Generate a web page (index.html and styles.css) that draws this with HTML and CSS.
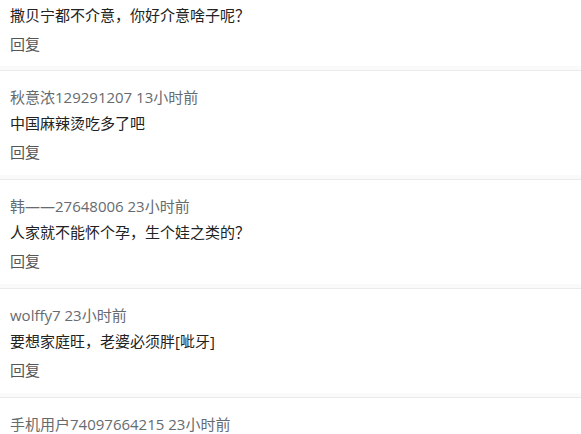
FILE: index.html
```html
<!DOCTYPE html>
<html lang="zh-CN">

<head>
    <meta charset="UTF-8">
    <meta name="viewport" content="width=device-width, initial-scale=1.0">
    <title>评论</title>

    <link rel="stylesheet" href="styles.css">
</head>

<body>
    <div class="list">
        <div class="item first">
            <div class="text">撒贝宁都不介意，你好介意啥子呢？</div>
            <div class="reply">回复</div>
        </div>
        <div class="sep"></div>

        <div class="item">
            <div class="meta">秋意浓129291207 13小时前</div>
            <div class="text">中国麻辣烫吃多了吧</div>
            <div class="reply">回复</div>
        </div>
        <div class="sep"></div>

        <div class="item">
            <div class="meta">韩——27648006 23小时前</div>
            <div class="text">人家就不能怀个孕，生个娃之类的？</div>
            <div class="reply">回复</div>
        </div>
        <div class="sep"></div>

        <div class="item">
            <div class="meta">wolffy7 23小时前</div>
            <div class="text">要想家庭旺，老婆必须胖[呲牙]</div>
            <div class="reply">回复</div>
        </div>
        <div class="sep"></div>

        <div class="item">
            <div class="meta">手机用户74097664215 23小时前</div>
        </div>
    </div>
</body>

</html>
```

FILE: styles.css
```css
* {
    box-sizing: border-box;
    padding: 0;
    margin: 0;
}

body {
    background-color: #fff;
    font-family: "Open Sans", "Noto Sans CJK SC", sans-serif;
    font-size: 15px;
    overflow: hidden;
}

.list {
    display: flex;
    flex-direction: column;
}

.item {
    padding: 13px 10px 10px;
}

.item.first {
    padding-top: 2px;
    padding-bottom: 9px;
}

.meta,
.text,
.reply {
    line-height: 26px;
    white-space: nowrap;
}

.meta {
    color: #666b70;
}

.text {
    color: #222;
}

.reply {
    margin-top: 3px;
    color: #555;
}

.sep {
    height: 5px;
    background-color: #fafafa;
    border-bottom: 1px solid #ebebeb;
}
```
